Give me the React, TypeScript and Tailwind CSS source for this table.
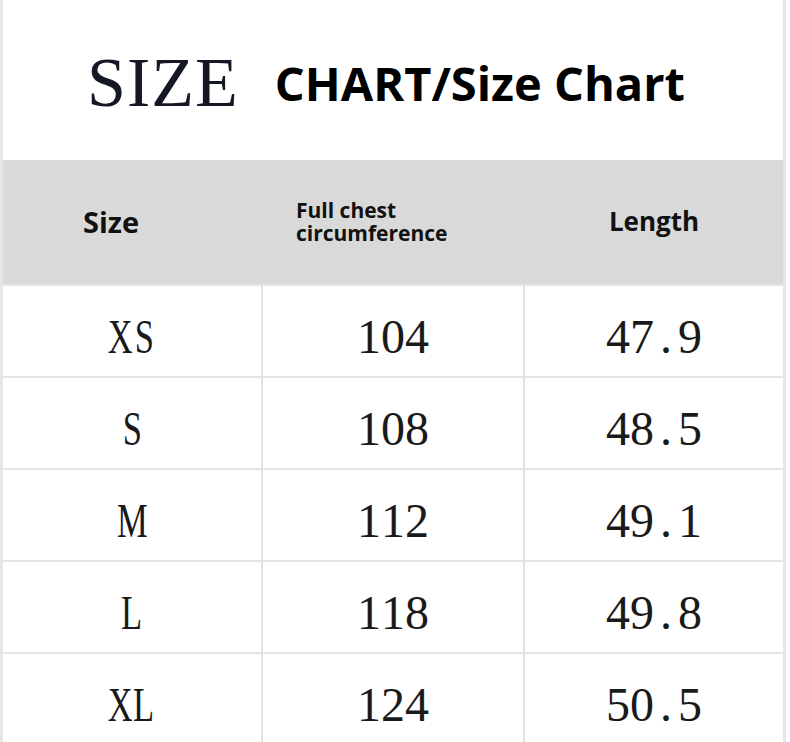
import React from 'react';

const rows = [
  ['XS', '104', '47.9'],
  ['S', '108', '48.5'],
  ['M', '112', '49.1'],
  ['L', '118', '49.8'],
  ['XL', '124', '50.5'],
];

const serif = { fontFamily: '"Liberation Serif", "Times New Roman", serif' };

// half-width cells, like the CJK font in the original picture
function Mono({ text }: { text: string }) {
  return (
    <span className="flex text-[48px] leading-none text-[#1a1a1a]" style={serif}>
      {text.split('').map((c, i) => (
        <span key={i} className="w-[24px] flex justify-center">
          <span className={/[A-Z]/.test(c) ? 'inline-block scale-x-[0.72]' : 'inline-block'}>{c}</span>
        </span>
      ))}
    </span>
  );
}

export default function App() {
  return (
    <div className="w-[790px] h-[742px] bg-white overflow-hidden">
      <div className="w-[786px] border-x-[3px] border-[#e6e6e6]">
        {/* title */}
        <div className="h-[160px] flex items-center justify-center gap-[36px] pt-[6px] pr-[14px]">
          <span
            className="text-[70px] leading-none text-[#141824] tracking-[1px]"
            style={serif}
          >
            SIZE
          </span>
          <span
            className="text-[47px] leading-none font-bold text-black"
            style={{ fontFamily: '"Open Sans", "Noto Sans", sans-serif' }}
          >
            CHART/Size Chart
          </span>
        </div>

        {/* header */}
        <div
          className="h-[124px] bg-[#d9d9d9] grid grid-cols-[260px_262px_258px] items-center font-bold text-[#111]"
          style={{ fontFamily: '"Open Sans", "Noto Sans", sans-serif' }}
        >
          <div className="pl-[80px] text-[29px]">Size</div>
          <div className="pl-[33px] text-[21px] leading-[23px]">
            Full chest
            <br />
            circumference
          </div>
          <div className="text-center text-[26px] pb-[2px]">Length</div>
        </div>

        {/* rows */}
        {rows.map((r) => (
          <div
            key={r[0]}
            className="h-[92px] border-t-2 border-[#e3e3e3] grid grid-cols-[260px_262px_258px]"
          >
            {r.map((v, i) => (
              <div
                key={i}
                className={`flex items-center justify-center pt-[12px] ${i < 2 ? 'border-r-2 border-[#e3e3e3]' : ''}`}
              >
                <Mono text={v} />
              </div>
            ))}
          </div>
        ))}
      </div>
    </div>
  );
}
